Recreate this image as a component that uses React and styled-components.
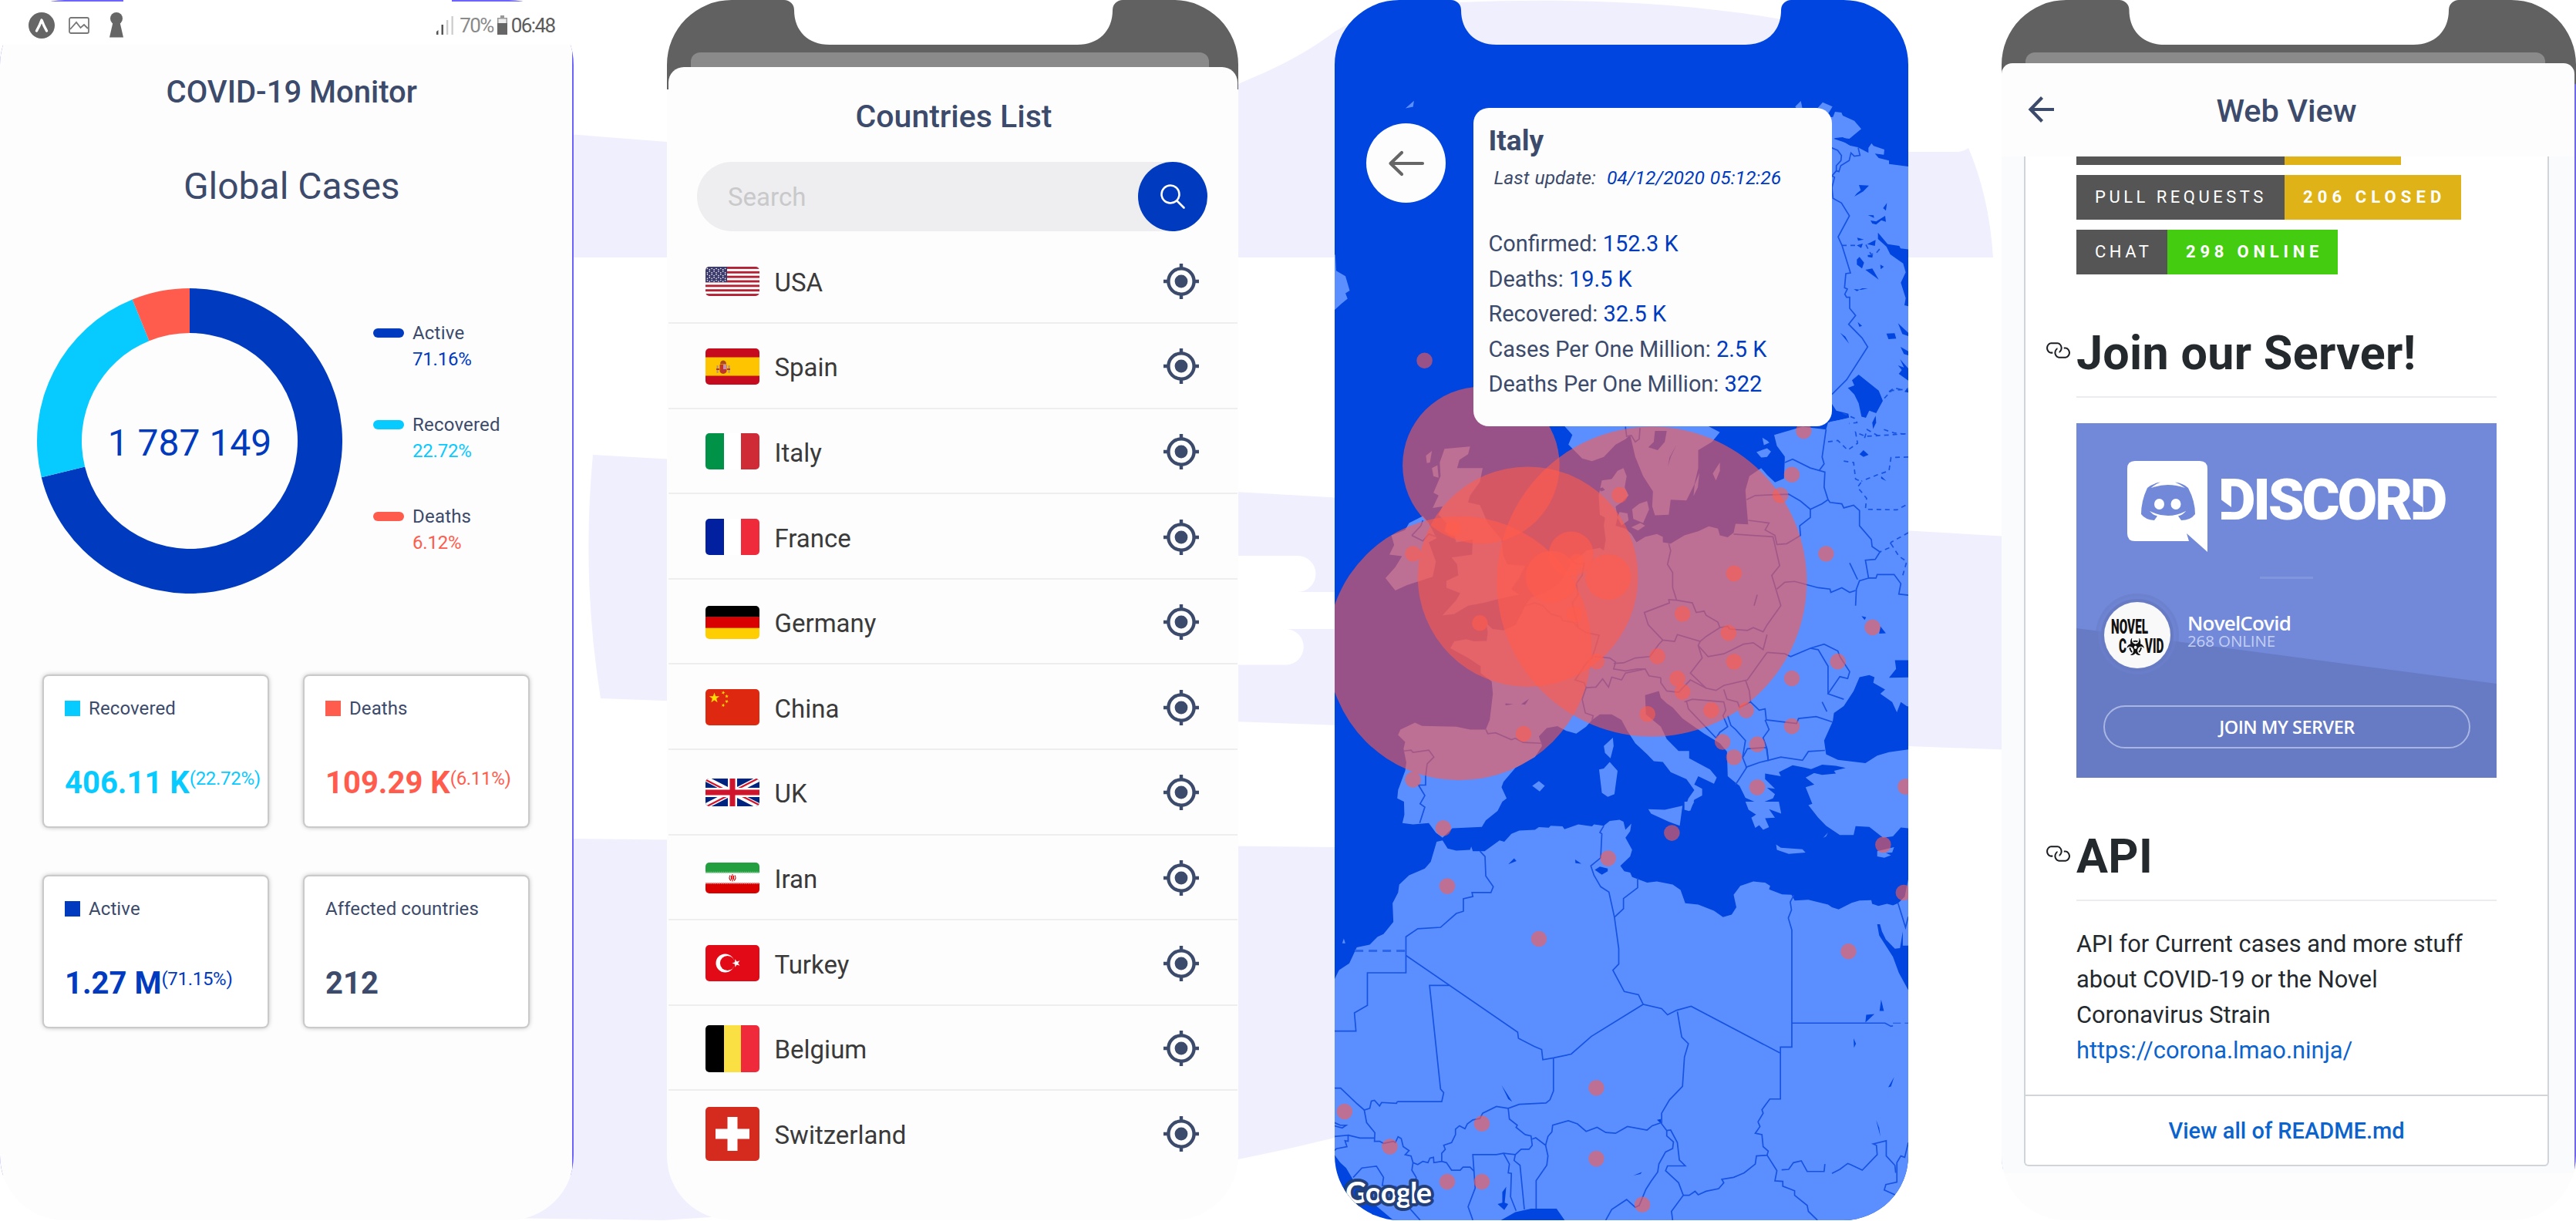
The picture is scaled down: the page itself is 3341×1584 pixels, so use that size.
import React from "react";
import styled, { createGlobalStyle } from "styled-components";
import { FaBiohazard } from "react-icons/fa";

const ink = "#3c4a6b";
const blue = "#003bbf";
const cyan = "#07caff";
const coral = "#ff5c4d";
const violet = "#6c63ff";
const paper = "#fdfdfd";
const water = "#0045df";
const land = "#5b8fff";

const Global = createGlobalStyle`
  * { box-sizing: border-box; }
  body { margin: 0; background: #fff; font-family: Roboto, "Liberation Sans", sans-serif; }
  h1, h2, h3, p, ul { margin: 0; padding: 0; font-weight: inherit; }
  svg { display: block; flex: none; }
`;

/* ---------- page ---------- */

const Stage = styled.main`
  position: relative;
  width: 3341px;
  height: 1584px;
  overflow: hidden;
  display: flex;
`;

const Backdrop = styled.svg`
  position: absolute;
  inset: 0;
`;

const phoneOutline = (w, notch) => {
  const cut = notch
    ? `H${notch[0] - 13} A13 13 0 0 1 ${notch[0]} 13 C${notch[0]} 40 ${notch[0] + 18} 58 ${notch[0] + 46} 58 ` +
      `H${notch[1] - 46} C${notch[1] - 18} 58 ${notch[1]} 40 ${notch[1]} 13 A13 13 0 0 1 ${notch[1] + 13} 0 `
    : "";
  return `M0 84 A84 84 0 0 1 84 0 ${cut}H${w - 84} A84 84 0 0 1 ${w} 84 V1499 A84 84 0 0 1 ${w - 84} 1583 H84 A84 84 0 0 1 0 1499 Z`;
};

const Phone = styled.section`
  position: relative;
  flex: none;
  width: ${(p) => p.$width}px;
  height: 1584px;
  margin-right: ${(p) => p.$after || 0}px;
  padding-right: ${(p) => p.$edge || 0}px;
  background: ${(p) => p.$back};
  clip-path: path("${(p) => phoneOutline(p.$width, p.$notch)}");
  display: flex;
  flex-direction: column;
`;

const ScreenTitle = styled.h1`
  font-size: ${(p) => p.$size || 40}px;
  line-height: 48px;
  font-weight: 500;
  color: ${ink};
  text-align: center;
  white-space: nowrap;
`;

/* ---------- dashboard ---------- */

const Dashboard = styled.div`
  flex: 1;
  background: ${paper};
  display: flex;
  flex-direction: column;
`;

const TopEdge = styled.div`
  display: flex;
  height: 2px;
  padding-left: 65px;
  gap: 426px;
  background: #fff;
`;
const EdgeMark = styled.i`
  width: 95px;
  background: ${violet};
`;

const StatusBar = styled.header`
  height: 56px;
  background: #fff;
  display: flex;
  align-items: center;
  padding: 5px 22px 0 37px;
`;
const StatusIcons = styled.div`
  display: flex;
  align-items: center;
  gap: 18px;
  margin-right: auto;
  svg:last-child { margin-left: 8px; }
`;
const StatusText = styled.span`
  font-size: 26px;
  line-height: 30px;
  letter-spacing: -1.6px;
  color: ${(p) => (p.$strong ? "#5c5c5c" : "#8a8a8a")};
  margin: ${(p) => (p.$strong ? "0 0 0 5px" : "0 5px 0 8px")};
`;

const DashTitle = styled(ScreenTitle)`
  margin-top: 38px;
  padding-left: 15px;
`;
const CasesTitle = styled.h2`
  margin-top: 70px;
  padding-left: 15px;
  font-size: 48px;
  line-height: 56px;
  color: ${ink};
  text-align: center;
`;

const ChartRow = styled.div`
  margin-top: 104px;
  padding-left: 48px;
  display: flex;
`;
const Donut = styled.div`
  display: grid;
  place-items: center;
  > * { grid-area: 1 / 1; }
`;
const Total = styled.strong`
  font-size: 48px;
  line-height: 56px;
  font-weight: 400;
  color: ${blue};
  padding-top: 5px;
`;
const Legend = styled.ul`
  list-style: none;
  margin: 42px 0 0 40px;
  display: flex;
  flex-direction: column;
  gap: 52px;
`;
const LegendItem = styled.li`
  display: grid;
  grid-template-columns: 40px auto;
  column-gap: 11px;
  font-size: 24px;
  line-height: 33.5px;
  letter-spacing: 0.2px;
  color: ${ink};
`;
const Pill = styled.i`
  height: 12px;
  margin-top: 10px;
  border-radius: 6px;
  background: ${(p) => p.$color};
`;
const LegendValue = styled.span`
  grid-column: 2;
  letter-spacing: -0.2px;
  color: ${(p) => p.$color};
`;

const StatGrid = styled.div`
  margin: 107px 0 0 56.5px;
  display: grid;
  grid-template-columns: 290.5px 290.5px;
  grid-auto-rows: 195px;
  gap: 65px 47.5px;
`;
const StatCard = styled.article`
  border-radius: 6px;
  background: #fff;
  box-shadow: 0 0 0 2px #cacaca, 0 0 7px rgba(0, 0, 0, 0.45);
  padding: 24.5px 0 0 27.5px;
`;
const StatLabel = styled.div`
  display: flex;
  align-items: center;
  gap: 11px;
  font-size: 24px;
  line-height: 34px;
  letter-spacing: 0.1px;
  color: ${ink};
`;
const Swatch = styled.i`
  width: 20px;
  height: 20px;
  background: ${(p) => p.$color};
`;
const StatValue = styled.div`
  margin-top: 56.5px;
  display: flex;
  align-items: flex-start;
  font-size: 40px;
  line-height: 48px;
  font-weight: 700;
  white-space: nowrap;
  color: ${(p) => p.$color};
`;
const StatShare = styled.span`
  font-size: 24px;
  line-height: 37px;
  font-weight: 400;
  letter-spacing: -0.3px;
`;

/* ---------- stacked sheets (list and web view) ---------- */

const Peek = styled.div`
  flex: none;
  margin: ${(p) => p.$top}px 38px 0 31px;
  height: ${(p) => p.$height}px;
  border-radius: 12px 12px 0 0;
  background: #8a8a8a;
`;
const Sheet = styled.div`
  flex: 1;
  min-height: 0;
  margin: 0 ${(p) => p.$inset || 0}px;
  border-radius: ${(p) => p.$round || 20}px ${(p) => p.$round || 20}px 0 0;
  background: ${paper};
  display: flex;
  flex-direction: column;
`;

/* ---------- countries ---------- */

const ListTitle = styled(ScreenTitle)`
  padding: 40px 0 0 3px;
`;
const SearchBar = styled.div`
  margin: 35px 38.5px 0 37.5px;
  height: 90px;
  flex: none;
  border-radius: 45px;
  background: #eeeef0;
  display: flex;
  align-items: center;
  justify-content: space-between;
  padding-left: 40px;
  font-size: 33px;
  color: #c9c9cb;
`;
const SearchButton = styled.button`
  width: 90px;
  height: 90px;
  border: 0;
  padding: 0;
  border-radius: 50%;
  background: ${blue};
  display: grid;
  place-items: center;
`;
const CountryList = styled.ul`
  list-style: none;
  margin-top: 9.5px;
`;
const CountryRow = styled.li`
  height: 110.6px;
  padding: 2px 49.5px 0 48.5px;
  display: flex;
  align-items: center;
  border-bottom: 2px solid #eeeeee;
  &:last-child { border-bottom-color: transparent; }
`;
const CountryName = styled.span`
  flex: 1;
  padding-top: 4px;
  margin-left: 19.5px;
  font-size: 33px;
  line-height: 40px;
  color: #3a3a3a;
`;
const FlagFrame = styled.svg`
  border-radius: 5px;
`;

/* ---------- map ---------- */

const MapCanvas = styled.svg`
  position: absolute;
  inset: 0;
`;
const MapOverlay = styled.div`
  position: relative;
  display: flex;
  align-items: flex-start;
  padding: 140px 0 0 41px;
`;
const RoundBack = styled.button`
  width: 103px;
  height: 103px;
  margin-top: 20px;
  border: 0;
  padding: 0;
  border-radius: 50%;
  background: ${paper};
  display: grid;
  place-items: center;
`;
const InfoCard = styled.article`
  width: 465px;
  height: 413px;
  margin-left: 36px;
  border-radius: 20px;
  background: ${paper};
  padding: 21px 0 0 19.500px;
  color: ${ink};
`;
const InfoName = styled.h2`
  font-size: 37px;
  line-height: 44px;
  font-weight: 700;
`;
const InfoDate = styled.p`
  margin-top: 10px;
  padding-left: 7px;
  font-size: 24.6px;
  line-height: 32px;
  font-style: italic;
  white-space: pre;
  word-spacing: 1px;
`;
const InfoLines = styled.div`
  margin-top: 47px;
  font-size: 28.9px;
  line-height: 45.5px;
`;
const InfoLine = styled.p`
  white-space: nowrap;
`;
const Figure = styled.span`
  color: ${blue};
`;

/* ---------- web view ---------- */

const WebHeader = styled.header`
  flex: none;
  height: 121px;
  display: grid;
  grid-template-columns: 70px 1fr 74px;
  align-items: center;
  svg { margin-left: 34px; margin-top: -2px; }
  h1 { padding-top: 2px; }
`;
const WebBody = styled.div`
  flex: none;
  height: 1319px;
  background: #fafbfc;
  padding: 0 33px 9px 29px;
`;
const Readme = styled.article`
  height: 100%;
  border: 2px solid #d1d5da;
  border-top: 0;
  border-radius: 0 0 6px 6px;
  background: #fff;
  display: flex;
  flex-direction: column;
  color: #24292e;
`;
const ReadmeContent = styled.div`
  padding: 0 66px;
`;
const Badge = styled.div`
  display: flex;
  width: max-content;
  height: 58px;
  margin-bottom: 13px;
  font-size: 22px;
  line-height: 58px;
  color: #fff;
`;
const BadgeTail = styled(Badge)`
  height: 10.5px;
  margin-bottom: 13.5px;
`;
const BadgeName = styled.span`
  width: ${(p) => p.$width}px;
  padding-left: 24px;
  letter-spacing: 4.5px;
  background: #555;
  white-space: nowrap;
`;
const BadgeValue = styled.b`
  width: ${(p) => p.$width}px;
  padding-left: 24px;
  letter-spacing: ${(p) => p.$tracking || 0}px;
  background: ${(p) => p.$color};
  white-space: nowrap;
`;
const Heading = styled.h2`
  margin-top: 66px;
  margin-left: -41px;
  display: flex;
  align-items: center;
  font-size: 61px;
  line-height: 72px;
  font-weight: 700;
  letter-spacing: 0.3px;
  white-space: nowrap;
  svg { margin: 0 8px 8px 0; }
`;
const Rule = styled.hr`
  border: 0;
  height: 2px;
  margin: 20px 0 0;
  background: #eaecef;
`;
const DiscordCard = styled.div`
  position: relative;
  margin-top: 33px;
  height: 460px;
  background: #7289da;
  font-family: "Open Sans", "Noto Sans", sans-serif;
  color: #fff;
  display: flex;
  flex-direction: column;
`;
const DiscordSlope = styled.i`
  position: absolute;
  inset: 0;
  background: #677bc4;
  clip-path: polygon(0 266px, 100% 338px, 100% 100%, 0 100%);
`;
const DiscordBrand = styled.div`
  position: relative;
  display: flex;
  align-items: flex-start;
  padding: 49px 0 0 66px;
`;
const Wordmark = styled.span`
  position: relative;
  margin: 8px 0 0 14px;
  font-family: Roboto, sans-serif;
  font-weight: 900;
  font-size: 75px;
  line-height: 84px;
  letter-spacing: -3.2px;
`;
const StemCut = styled.i`
  position: absolute;
  left: ${(p) => p.$left}px;
  top: 41px;
  width: 15px;
  height: 17px;
  background: #7289da;
  clip-path: polygon(0 0, 100% 65%, 100% 100%, 0 100%);
`;
const ShortRule = styled.i`
  position: relative;
  width: 69px;
  height: 3px;
  margin: 32px auto 0;
  background: #8296de;
`;
const ServerRow = styled.div`
  position: relative;
  display: flex;
  align-items: center;
  padding-left: 36px;
  margin-top: 30px;
  height: 86px;
`;
const Avatar = styled.div`
  width: 86px;
  height: 86px;
  border-radius: 50%;
  background: #f9f9f9;
  color: #111;
  box-shadow: 0 0 0 4px #677bc4, 0 0 0 8px rgba(114, 137, 218, 0.2), 0 0 0 11px rgba(103, 123, 196, 0.5);
  font-family: Roboto, sans-serif;
  font-weight: 900;
  font-size: 25px;
  line-height: 25px;
  padding-top: 20px;
`;
const AvatarLine = styled.div`
  display: flex;
  align-items: center;
  gap: 1px;
  width: max-content;
  margin-left: ${(p) => p.$left}px;
  transform: scaleX(0.61);
  transform-origin: 0 50%;
`;
const Hazard = styled(FaBiohazard).attrs({ preserveAspectRatio: "none" })`
  width: 37px;
  height: 22px;
`;
const ServerText = styled.div`
  margin: -12px 0 0 22px;
`;
const ServerName = styled.div`
  font-size: 26px;
  line-height: 26px;
  font-weight: 600;
  letter-spacing: -0.8px;
`;
const ServerOnline = styled.div`
  font-size: 20.5px;
  line-height: 21px;
  letter-spacing: -0.1px;
  color: #c5cff1;
`;
const JoinButton = styled.button`
  position: relative;
  margin: 48px 34px 0 35px;
  height: 56px;
  border: 2.5px solid #a9b5e2;
  border-radius: 28px;
  background: none;
  color: #fff;
  font: 600 23.5px/50px "Open Sans", sans-serif;
  letter-spacing: -0.5px;
  padding: 0;
`;
const Paragraph = styled.p`
  margin-top: 33px;
  font-size: 30.8px;
  line-height: 46px;
  white-space: nowrap;
`;
const Link = styled.a`
  color: #0b63ce;
`;
const ReadmeFooter = styled.footer`
  flex: 1;
  margin-top: 34px;
  border-top: 2px solid #d1d5da;
  display: grid;
  place-items: center;
  font-size: 29px;
  font-weight: 500;
  color: #0b63ce;
`;

/* ---------- drawings ---------- */

const arc = (from, to, R, r, c) => {
  const pt = (t, rad) => {
    const a = t * 2 * Math.PI - Math.PI / 2;
    return `${(c + rad * Math.cos(a)).toFixed(2)} ${(c + rad * Math.sin(a)).toFixed(2)}`;
  };
  const big = to - from > 0.5 ? 1 : 0;
  return `M${pt(from, R)} A${R} ${R} 0 ${big} 1 ${pt(to, R)} L${pt(to, r)} A${r} ${r} 0 ${big} 0 ${pt(from, r)} Z`;
};

const DonutChart = () => (
  <svg width="396" height="396" viewBox="0 0 396 396">
    <path d={arc(0, 0.7116, 198, 140, 198)} fill={blue} />
    <path d={arc(0.7116, 0.9388, 198, 140, 198)} fill={cyan} />
    <path d={arc(0.9388, 0.99999, 198, 140, 198)} fill={coral} />
  </svg>
);

const Locate = () => (
  <svg width="46" height="46" viewBox="0 0 46 46" fill="none" stroke={ink} strokeWidth="4.4">
    <circle cx="23" cy="23" r="16.6" />
    <path d="M23 0V7M23 39V46M0 23H7M39 23H46" />
    <circle cx="23" cy="23" r="8.4" fill={ink} stroke="none" />
  </svg>
);

const LinkIcon = () => (
  <svg width="33" height="33" viewBox="0 0 16 16" fill="#1b1f23">
    <path d="M4 9h1v1H4c-1.5 0-3-1.69-3-3.5S2.55 3 4 3h4c1.45 0 3 1.69 3 3.5 0 1.41-.91 2.72-2 3.25V8.59c.58-.45 1-1.27 1-2.09C10 5.22 8.98 4 8 4H4c-.98 0-2 1.22-2 2.5S3 9 4 9zm9-3h-1v1h1c1 0 2 1.22 2 2.5S13.98 12 13 12H9c-.98 0-2-1.22-2-2.5 0-.83.42-1.64 1-2.09V6.25c-1.09.53-2 1.84-2 3.25C6 11.31 7.55 13 9 13h4c1.45 0 3-1.69 3-3.5S14.5 6 13 6z" />
  </svg>
);

const star = (cx, cy, r, turn = 0) =>
  Array.from({ length: 10 }, (_, i) => {
    const a = (i * Math.PI) / 5 - Math.PI / 2 + turn;
    const k = i % 2 ? r * 0.4 : r;
    return `${(cx + k * Math.cos(a)).toFixed(2)},${(cy + k * Math.sin(a)).toFixed(2)}`;
  }).join(" ");

const Bands = ({ colors, h, vertical }) =>
  colors.map((c, i) =>
    vertical ? (
      <rect key={i} x={i ? 24 + (i - 1) * 22 : 0} width="26" height={h} fill={c} />
    ) : (
      <rect key={i} y={(h / 3) * i} width="70" height={h / 3 + 0.4} fill={c} />
    )
  );

const countries = [
  {
    name: "USA", h: 38,
    art: (
      <>
        <rect width="70" height="38" fill="#fff" />
        {[0, 1, 2, 3, 4, 5, 6].map((i) => <rect key={i} y={i * 5.85} width="70" height="2.9" fill="#b22234" />)}
        <rect width="28" height="20" fill="#3c3b6e" />
        {Array.from({ length: 45 }, (_, i) => (
          <circle key={i} cx={2.4 + (i % 9) * 2.9} cy={2.5 + Math.floor(i / 9) * 3.8 + (i % 2 ? 1.4 : 0)} r="0.8" fill="#fff" />
        ))}
      </>
    ),
  },
  {
    name: "Spain", h: 47,
    art: (
      <>
        <rect width="70" height="47" fill="#c60b1e" />
        <rect y="11.5" width="70" height="24" fill="#ffc400" />
        <path d="M15.500 22V32M30.500 22V32" stroke="#b9907a" strokeWidth="2" />
        <path d="M18.500 21H27.500V29Q27.500 32 23 33Q18.500 32 18.500 29Z" fill="#c0352b" />
        <path d="M23 21H27.500V27H23Z" fill="#c98fb0" />
        <path d="M19 20.500Q19 16 23 15.500Q27 16 27 20.500Z" fill="#ad4a1c" />
        <path d="M14 27H18M28 27H32" stroke="#ad1519" strokeWidth="1.500" />
      </>
    ),
  },
  { name: "Italy", h: 47, art: <Bands vertical h={47} colors={["#009246", "#fff", "#ce2b37"]} /> },
  { name: "France", h: 47, art: <Bands vertical h={47} colors={["#00209f", "#fff", "#ef2b3b"]} /> },
  { name: "Germany", h: 43, art: <Bands h={43} colors={["#000", "#d80000", "#ffce00"]} /> },
  {
    name: "China", h: 47,
    art: (
      <>
        <rect width="70" height="47" fill="#de2910" />
        <polygon points={star(11.5, 11.5, 7)} fill="#ffde00" />
        <polygon points={star(23, 4.6, 2.5, 0.4)} fill="#ffde00" />
        <polygon points={star(27.5, 9.3, 2.5, 0.1)} fill="#ffde00" />
        <polygon points={star(27.5, 16, 2.5, 0.6)} fill="#ffde00" />
        <polygon points={star(23, 21, 2.5, 0.3)} fill="#ffde00" />
      </>
    ),
  },
  {
    name: "UK", h: 36,
    art: (
      <>
        <rect width="70" height="36" fill="#00247d" />
        <path d="M0 0L70 36M70 0L0 36" stroke="#fff" strokeWidth="7" />
        <path d="M0 1.500L35 19.500M70 34.500L35 16.500M68 0L35 17M2 36L35 19" stroke="#cf142b" strokeWidth="2.200" />
        <path d="M35 0V36M0 18H70" stroke="#fff" strokeWidth="12" />
        <path d="M35 0V36M0 18H70" stroke="#cf142b" strokeWidth="7" />
      </>
    ),
  },
  {
    name: "Iran", h: 40,
    art: (
      <>
        <Bands h={40} colors={["#239f40", "#fff", "#da0000"]} />
        <path d="M0 12.800H70" stroke="#7cc68c" strokeWidth="2" strokeDasharray="1.500 1" />
        <path d="M0 27H70" stroke="#e98080" strokeWidth="2" strokeDasharray="1.500 1" />
        <path d="M35 15V24.500M32 16.500Q29.500 20.500 33 23.500M38 16.500Q40.500 20.500 37 23.500M33.500 17V22M36.500 17V22" stroke="#da0000" strokeWidth="1.100" fill="none" />
      </>
    ),
  },
  {
    name: "Turkey", h: 47,
    art: (
      <>
        <rect width="70" height="47" fill="#e30a17" />
        <circle cx="25.500" cy="23.500" r="12" fill="#fff" />
        <circle cx="28.500" cy="23.500" r="9.600" fill="#e30a17" />
        <polygon points={star(40, 23.5, 5.5, -Math.PI / 2)} fill="#fff" />
      </>
    ),
  },
  { name: "Belgium", h: 61, art: <Bands vertical h={61} colors={["#000", "#fae042", "#ef2b3b"]} /> },
  {
    name: "Switzerland", h: 70,
    art: (
      <>
        <rect width="70" height="70" fill="#d52b1e" />
        <path d="M35 13V57M13 35H57" stroke="#fff" strokeWidth="13" />
      </>
    ),
  },
];

/* Map tiles: every tile has its own grid, placed on the canvas by its transform. */
const tiles = {
  west: { x: -71, y: 0, sx: 0.5485, sy: 0.3444 },
  europe: { x: -31, y: 500, sx: 0.5102, sy: 0.3571 },
  africa: { x: -31, y: 1040, sx: 0.5102, sy: 0.3469 },
  north: { x: 559, y: 120, sx: 0.3333, sy: 0.3333 },
};
const place = (t) => `translate(${tiles[t].x} ${tiles[t].y}) scale(${tiles[t].sx} ${tiles[t].sy})`;

const europeLand = [
  "237,1512 220,1500 222,1470 240,1400 243,1370 236,1320 240,1295 222,1270 228,1250 265,1225 283,1237 370,1240 405,1250 445,1250 455,1215 463,1120 460,1075 432,1045 432,1020 400,990 355,955 365,930 395,922 415,930 447,928 450,900 447,865 462,885 490,890 520,870 535,830 545,800 560,770 600,750 630,720 640,700 665,640 690,615 700,600 735,590 745,600 750,560 745,510 748,480 735,470 732,400 740,345 765,340 780,310 795,300 803,330 798,370 808,400 790,425 775,440 780,480 775,510 800,520 815,540 828,570 850,550 880,540 895,550 895,570 915,575 950,545 985,530 1012,512 1035,520 1040,545 1060,552 1075,535 1080,503 1112,505 1108,440 1105,380 1115,330 1145,300 1160,325 1180,352 1203,338 1205,270 1205,258 1185,220 1178,180 1250,150 1310,160 1315,135 1345,125 1530,60 1530,1610 1500,1606 1480,1638 1455,1643 1420,1604 1385,1601 1380,1633 1345,1633 1310,1600 1290,1570 1265,1525 1275,1520 1258,1460 1280,1450 1258,1425 1290,1400 1255,1388 1225,1380 1190,1405 1195,1420 1155,1410 1155,1430 1180,1465 1160,1462 1180,1485 1175,1500 1140,1520 1105,1498 1090,1455 1060,1420 1058,1330 1040,1300 1000,1265 945,1210 920,1170 905,1155 890,1135 885,1110 850,1125 852,1195 890,1240 905,1285 935,1328 962,1328 962,1355 1015,1395 1032,1425 1025,1447 985,1420 975,1450 995,1465 995,1490 975,1505 965,1545 950,1540 960,1500 975,1470 955,1430 915,1405 895,1368 872,1365 855,1340 825,1300 805,1255 790,1215 765,1195 735,1195 715,1215 700,1240 675,1265 650,1255 627,1238 600,1245 580,1275 588,1310 570,1350 520,1390 490,1440 485,1460 498,1500 487,1512 475,1546 445,1580 435,1604 360,1609 335,1643 318,1625 300,1590 260,1595 233,1590 238,1560",
  "340,230 405,222 400,250 378,270 372,300 437,300 430,350 405,400 400,425 430,435 450,500 485,560 490,620 500,650 545,655 530,700 510,740 530,760 480,775 440,790 400,800 365,830 335,835 370,780 380,755 345,735 345,710 375,690 372,650 358,625 410,615 412,560 370,570 365,545 340,530 345,500 325,470 335,440 310,445 325,400 312,390 330,330 328,280",
  "293,255 308,238 303,280 295,282",
  "308,300 322,290 325,335 312,330",
  "285,475 250,500 240,525 205,545 212,580 200,615 232,620 215,660 190,700 215,745 245,725 310,695 318,640 300,570 320,555 300,500",
  "640,140 665,180 655,215 690,265 715,275 745,260 775,215 800,195 812,180 825,260 845,330 870,385 868,440 875,472 910,470 915,415 955,418 975,360 985,300 985,235 1020,205 1040,170 1000,140",
  "1022,320 1040,280 1040,310 1030,345",
  "988,318 984,370 973,402 976,360",
  "817,450 835,430 855,420 860,450 845,500 820,485",
  "785,460 805,465 808,490 790,508 780,480",
  "815,515 838,500 850,510 832,527",
  "1148,190 1160,200 1166,208 1152,217",
  "1133,242 1160,228 1170,240 1160,260 1145,262",
  "745,1310 768,1280 770,1310 762,1355 748,1335",
  "733,1395 745,1392 760,1368 780,1400 772,1485 755,1495 740,1480",
  "563,1455 580,1437 595,1455 582,1475",
];
const europeWater = [
  "1420,1052 1395,1060 1380,1110 1355,1165 1330,1190 1327,1220 1305,1290 1310,1340 1340,1360 1410,1372 1440,1345 1470,1332 1530,1320 1530,1170 1515,1165 1500,1150 1490,1187 1478,1150 1448,1120 1460,1105 1430,1080 1433,1060",
  "1485,998 1530,998 1530,1060 1470,1062 1488,1030",
  "1265,1398 1300,1378 1335,1382 1360,1390 1330,1400 1335,1410 1300,1415 1270,1405",
  "875,165 905,165 900,205 882,235 858,225 872,205",
  "930,215 915,260 908,295 912,262",
  "1395,250 1405,235 1418,252 1405,260",
  "1400,838 1412,842 1408,852",
  "1448,875 1462,900 1445,902",
  "495,1155 515,1158 495,1162",
  "535,1158 555,1138 545,1160",
  "920,480 935,495 922,498",
  "732,375 742,370 748,380 738,385",
  "1450,330 1463,347 1450,338",
];
const europeLines = [
  "445,1250 450,1265 470,1262 510,1287 520,1282 540,1297 588,1300",
  "236,1328 255,1325 260,1333 300,1325 313,1350 296,1375 292,1420 292,1452 274,1452 290,1490 278,1520 290,1532 277,1590",
  "545,800 570,790 590,800 610,830 635,840 640,855 668,860 680,880 700,898 733,908 722,960 715,990 700,1010 672,1070 695,1080 700,1098 690,1140 698,1190 718,1200 715,1215",
  "665,640 680,650 695,645 690,690 675,720 680,760 665,790 680,880",
  "700,1098 725,1096 742,1066 757,1096 765,1060 790,1070 800,1045 850,1030 860,1055 890,1062",
  "722,985 760,990 775,1005 770,1030 800,1037 830,1030 850,1030",
  "770,1010 795,1008 825,990 862,985 885,940 895,925",
  "910,575 915,600 907,650 920,680 920,735 930,780",
  "930,780 910,778 912,790 848,825 858,870 895,925 925,930 932,905 990,930 1005,912 1040,880 1035,860 1005,835 1000,820 980,825 970,790 930,780",
  "1040,880 1060,875 1065,885 1110,890 1125,880 1150,895 1160,870 1195,800 1172,690 1192,655 1175,550 1075,540",
  "990,930 985,945 1010,985 1050,975 1100,940 1125,935 1150,960 1160,905",
  "1160,970 1110,1070 1050,1090 1030,1108 1005,1100 965,1045 995,990 985,945",
  "1112,490 1165,500 1155,525 1180,545 1185,578 1210,575 1245,545 1243,510 1270,480 1270,450",
  "1108,415 1130,400 1215,395 1245,420 1270,450 1300,430 1315,415 1305,370 1307,315 1270,300 1225,268 1205,280",
  "1315,415 1320,425 1350,430 1355,445 1380,435 1395,455 1395,510 1425,560 1427,585 1447,605 1435,632 1410,635 1418,700 1395,710 1387,740 1385,800",
  "1418,700 1437,700 1440,687 1483,687 1500,720 1495,758 1519,762",
  "1185,740 1205,715 1230,712 1290,735 1320,740 1322,752 1350,735 1370,752 1385,745",
  "1160,970 1205,975 1220,985 1270,955 1305,940 1340,965 1345,985 1370,1040 1365,1065 1345,1058 1315,1120 1355,1140",
  "1270,955 1290,960 1315,1020 1315,1120",
  "1105,1070 1115,1110 1118,1150 1140,1180 1155,1175 1158,1215 1235,1228 1240,1210 1285,1203 1327,1223",
  "1155,1215 1165,1250 1150,1280 1160,1320 1163,1362 1195,1350 1250,1362 1265,1330 1307,1326",
  "1105,1388 1140,1370 1163,1362 1158,1315 1110,1320 1098,1352 1108,1388 1080,1450",
  "950,1150 970,1140 1050,1150 1055,1180 1048,1200 1060,1240 1040,1260 1030,1282",
  "955,1145 960,1175 1030,1280",
  "1050,1105 1058,1140 1085,1150 1090,1170 1118,1150",
  "890,1062 890,1080 905,1110 935,1115 965,1070 1005,1100",
  "1060,1200 1068,1235 1080,1250 1105,1290 1098,1350",
  "800,150 803,185 815,182 825,205 835,195 837,155",
  "257,545 285,565 300,540 320,550",
  "257,545 280,510 285,490",
  "1310,160 1300,260 1305,285 1292,310",
  "1135,760 1127,800",
  "1370,645 1390,705",
  "1300,1150 1312,1185",
];
const europeDashes = [
  "1315,205 1340,200 1365,235 1390,210 1385,170 1410,185 1470,180 1519,175",
  "1355,275 1380,280 1385,340 1400,350 1390,370 1413,410 1410,450 1490,452 1519,430",
  "1519,260 1475,262 1470,310 1440,325 1400,348",
  "1519,535 1475,570 1470,590 1447,605",
  "1475,575 1495,620 1515,640 1505,690",
];

const africaLand = [
  "320,150 335,145 348,175 370,183 405,180 408,168 412,185 442,185 480,145 492,150 510,120 530,108 570,105 580,95 605,97 610,90 640,92 645,103 680,85 715,92 720,85 745,90 760,72 785,68 795,75 800,105 815,82 812,110 800,135 817,180 812,205 787,240 797,260 812,265 817,282 855,303 880,298 920,310 940,330 952,380 985,385 1025,408 1048,432 1070,422 1082,395 1075,348 1092,315 1125,298 1155,303 1168,315 1165,328 1198,347 1222,348 1230,370 1265,367 1315,385 1325,395 1342,403 1375,378 1395,370 1425,368 1427,382 1443,390 1465,382 1480,388 1493,380 1510,355 1519,290 1530,290 1530,1575 650,1575 625,1522 560,1522 520,1535 480,1568 480,1575 218,1575 165,1510 110,1420 90,1370 75,1350 55,1310 55,680 72,630 98,605 117,545 150,535 170,505 185,495 210,450 208,380 222,340 225,310 250,275 290,250 305,225",
  "858,28 900,30 945,15 938,90 910,75 865,45",
  "950,0 975,0 962,35 950,30",
  "1183,160 1195,172 1250,178 1258,190 1215,195 1185,180",
  "1440,185 1483,170 1478,190 1462,192 1475,200 1458,210 1440,205",
  "1105,0 1190,0 1196,45 1165,28 1180,60 1155,62 1165,95 1150,105 1140,88 1130,98 1120,60 1132,48 1113,30",
  "80,530 84,512 88,530",
  "1303,135 1315,115 1310,130",
];
const africaWater = [
  "1440,458 1447,458 1452,485 1462,515 1485,550 1498,548 1505,485 1505,538 1530,538 1530,740 1519,705 1495,640 1480,580 1445,500",
  "722,255 735,243 755,250 755,260 740,273",
  "502,234 517,212 523,222",
  "672,216 688,232 673,230",
  "1450,740 1457,783 1446,783",
  "1412,797 1433,794 1410,826",
  "1380,885 1386,905 1381,920",
  "485,1060 512,1122 502,1112",
  "487,1500 487,1460 497,1440 493,1500 502,1505 492,1527 475,1505",
  "880,1190 890,1187 890,1203",
  "820,1398 842,1385 838,1392",
  "1483,1030 1475,1065 1468,1068",
  "1437,1190 1445,1220 1448,1252",
];
const africaLines = [
  "745,90 735,115 740,120 737,210 712,240 720,275 737,318 758,338 772,432 783,550 783,607 768,630 797,710 833,722 845,758",
  "831,285 831,322 795,362 795,400 772,432",
  "430,185 443,205 445,278 464,318 458,340 410,340 412,355 388,363 388,410 370,418 330,470 272,475 242,505 242,640 144,640 144,762 111,790 115,858 60,858",
  "242,575 526,862 528,885 568,915 587,927 590,965 617,958 662,944 713,878 845,758 892,774 907,797 930,780 967,765 1193,940",
  "352,687 302,687 330,1075 338,1088 333,1122 220,1122",
  "220,1122 218,1128 180,1125 175,1138 162,1117 154,1120 150,1147 136,1153 118,1130 76,1071 60,1071",
  "617,958 617,1082 608,1115 598,1127 530,1132 502,1147 472,1140 437,1165 430,1185 412,1190 398,1205 392,1223 378,1212 368,1225 368,1245 358,1275 338,1285 342,1300 333,1315 333,1345",
  "502,1147 505,1187 525,1210 522,1218 545,1245 560,1250 563,1285 555,1300 535,1300 520,1320 490,1315 472,1320 412,1320 418,1445 400,1515 412,1565",
  "563,1262 572,1257 597,1285 603,1325 600,1360 573,1417 573,1522",
  "597,1285 603,1252 613,1235 615,1210 655,1193 678,1205 700,1233 728,1218 750,1237 775,1240 805,1215 855,1228 868,1212 892,1200",
  "932,785 943,880 960,905 950,955 945,1065 912,1115 892,1165 892,1205 905,1230 905,1250 922,1272 920,1297 902,1310 885,1355 882,1385 865,1420 852,1450 835,1510 825,1517 803,1488 765,1525 750,1565",
  "905,1230 915,1228 932,1275 937,1340 952,1362 907,1362 902,1380 935,1425 947,1472 917,1532 920,1565",
  "947,1472 962,1472 977,1457 985,1470 1005,1457 1037,1447 1050,1425 1045,1412 1075,1405 1102,1388 1130,1355 1133,1325 1160,1322 1163,1307 1150,1290 1147,1245 1130,1240 1142,1215 1137,1197 1150,1165 1147,1152 1167,1112 1194,1112 1194,918 1223,918 1223,480 1214,435 1222,405 1219,375 1228,350",
  "1223,828 1460,828 1475,840 1480,838",
  "1160,1322 1185,1380 1180,1418 1200,1420 1200,1438 1230,1455 1230,1472 1262,1510 1265,1532 1288,1565",
  "1197,1377 1215,1375 1227,1350 1247,1343 1262,1383 1305,1383 1307,1355",
  "1325,1390 1345,1375 1365,1353 1372,1357 1402,1378 1440,1320 1438,1285 1430,1280 1463,1268 1463,1325 1485,1360 1487,1388",
  "1519,1275 1510,1330 1500,1325 1490,1350 1490,1423 1462,1432 1458,1452 1485,1470 1495,1492 1519,1480",
  "136,1153 142,1200 163,1238 162,1270 175,1270 185,1278 210,1270 215,1275 222,1253 230,1260 235,1290 250,1305 240,1320 255,1325 260,1350 272,1357 285,1345 298,1350 303,1333 312,1330 313,1350 333,1345 345,1350 358,1378 380,1378 387,1367 405,1367 415,1382",
  "260,1350 257,1378 268,1405 262,1470 245,1510 278,1565",
  "108,1405 130,1370 167,1363 185,1405 182,1435 217,1440 217,1470",
  "60,1252 95,1247 95,1270 87,1268 92,1290 65,1298 60,1305",
  "95,1247 125,1258 162,1258",
  "60,1200 75,1210 90,1210 80,1220 60,1212",
  "520,1320 517,1342 532,1360 543,1525",
  "490,1315 505,1355 502,1388 510,1390 508,1478 522,1530",
  "1493,380 1512,470 1519,430",
];

const northLand = [
  "200,100 262,95 270,75 295,78 300,90 345,110 372,142 326,180 290,176 265,180 310,195 330,207 358,213 400,235 400,215 412,198 420,208 462,222 460,242 425,238 440,255 480,265 480,278 555,288 570,290 570,1360 225,1360 240,1330 245,1300 250,1282 285,1275 325,1268 322,1250 275,1238 258,1212 200,1200",
  "115,55 137,33 143,62 120,62",
  "198,65 222,38 260,55 245,80",
];
const northWater = [
  "437,545 475,590 520,597 525,607 570,612 570,835 540,828 545,800 526,740 545,700 535,665 485,630 470,600 437,570",
  "362,1098 336,1120 345,1140 320,1150 345,1175 362,1210 373,1262 390,1266 403,1238 430,1248 456,1200 440,1160",
  "363,360 402,362 380,385 345,405 355,392 370,380",
  "457,450 472,430 468,460",
  "398,477 420,478 422,488",
  "408,498 430,502 465,480 468,503 450,497 430,514 415,510",
  "355,650 365,640 383,662 375,685 355,670",
  "388,690 415,685 440,728",
  "395,590 428,574 425,597",
  "356,565 382,572 360,577",
  "355,595 378,588 372,605",
  "446,670 460,678 448,688",
  "397,632 417,632 415,643 398,640",
  "343,765 370,768 398,763 375,762 355,773",
  "470,938 502,937 508,958 478,960",
  "515,898 560,940 560,950 532,940",
  "525,990 560,1010 560,1025 538,1018",
  "523,1038 560,1080 560,1125 518,1095 530,1080 515,1062 538,1070",
  "290,935 310,950 325,978",
  "358,893 375,908 365,912",
  "540,1165 553,1148 556,1168",
  "428,1258 430,1285 418,1310 415,1285",
  "265,178 300,174 335,190 330,207 300,190",
];
const northLines = [
  "256,215 280,225 295,245 293,265 275,285 275,305 285,308 292,285 325,265 332,235 345,248 367,245 360,215",
  "275,305 258,325 268,330 258,370 262,412 295,430 326,480 282,562 297,595 330,702 312,705 307,760 318,765 308,785 315,797 327,797 327,840 350,868 323,902 375,955 397,990 315,1118 258,1175",
];
const northDashes = [
  "297,595 370,595",
  "390,592 410,630 430,625 450,602",
  "480,1165 500,1150 535,1158",
  "462,1190 490,1160 550,1155",
  "460,1312 500,1325 545,1330",
  "300,1248 350,1270 355,1285 325,1288",
  "385,1345 395,1312 440,1338",
];

const hot = [
  ["europe", 867, 713, 201], ["europe", 552, 695, 142.8], ["europe", 378, 955, 171.3], ["europe", 433, 290, 101.8],
  ["europe", 662, 612, 29], ["europe", 612, 695, 33.7], ["europe", 756, 696, 29.6],
];
const dots = [
  ["west", 342, 1358], ["europe", 785, 398], ["europe", 1253, 165], ["europe", 1223, 324], ["europe", 1194, 399],
  ["europe", 1310, 612], ["europe", 260, 612], ["europe", 1076, 683], ["europe", 1428, 879], ["europe", 945, 830],
  ["europe", 1062, 899], ["europe", 430, 863], ["europe", 881, 984], ["europe", 1076, 1004], ["europe", 1340, 1003],
  ["europe", 932, 1065], ["europe", 945, 1113], ["europe", 1223, 1064], ["europe", 727, 1003], ["europe", 1018, 1180],
  ["europe", 1107, 1180], ["europe", 856, 1194], ["europe", 541, 1266], ["europe", 1223, 1238], ["europe", 1047, 1295],
  ["europe", 1135, 1304], ["europe", 1076, 1351], ["europe", 260, 1432], ["europe", 1135, 1460], ["europe", 1512, 1458],
  ["europe", 362, 520], ["europe", 676, 640], ["europe", 670, 832],
  ["africa", 337, 99], ["africa", 918, 117], ["africa", 1455, 161], ["africa", 756, 212], ["africa", 347, 316],
  ["africa", 1507, 340], ["africa", 580, 513], ["africa", 1367, 560], ["africa", 726, 1070], ["africa", 86, 1159],
  ["africa", 435, 1204], ["africa", 201, 1290], ["africa", 726, 1335], ["africa", 347, 1421], ["africa", 435, 1421],
  ["africa", 843, 1507],
];

const Shapes = ({ list, fill }) => list.map((pts, i) => <polygon key={i} points={pts} fill={fill} />);
const Lines = ({ list, dashed }) =>
  list.map((pts, i) => (
    <polyline
      key={i} points={pts} fill="none" stroke="#1653e3" strokeWidth="1.7"
      strokeDasharray={dashed ? "6 5" : undefined} vectorEffect="non-scaling-stroke"
    />
  ));
const Spot = ({ at: [t, x, y, r = 10.3] }) => (
  <circle cx={tiles[t].x + x * tiles[t].sx} cy={tiles[t].y + y * tiles[t].sy} r={r} fill={coral} fillOpacity="0.6" />
);

const WorldMap = () => (
  <MapCanvas width="744" height="1584" viewBox="0 0 744 1584">
    <g transform={place("west")} fill={land}>
      <polygon points="120,960 131,960 133,1020 155,1040 165,1095 155,1105 160,1125 145,1145 129,1168 120,1168" />
      <polygon points="297,408 317,380 315,402" />
    </g>
    <g transform={place("europe")}>
      <Shapes list={europeLand} fill={land} />
    </g>
    <g transform={place("north")}>
      <Shapes list={northLand} fill={land} />
      <Shapes list={northWater} fill={water} />
      <Lines list={northLines} />
      <Lines list={northDashes} dashed />
    </g>
    <g transform={place("europe")}>
      <Shapes list={europeWater} fill={water} />
      <Lines list={europeLines} />
      <Lines list={europeDashes} dashed />
    </g>
    <g transform={place("africa")}>
      <Shapes list={africaLand} fill={land} />
      <Shapes list={africaWater} fill={water} />
      <Lines list={africaLines} />
      <path d="M112 558H242" stroke="#2c66ec" strokeWidth="3" strokeDasharray="11 7" vectorEffect="non-scaling-stroke" />
      <path d="M1480 828H1500M1510 828H1519" stroke="#1653e3" strokeWidth="3" />
    </g>
    {hot.map((h, i) => <Spot key={i} at={h} />)}
    {dots.map((d, i) => <Spot key={i} at={d} />)}
    <text
      x="14" y="1561" fontFamily="Lato, sans-serif" fontWeight="700" fontSize="38" textLength="112"
      fill="#fff" stroke="#24407a" strokeWidth="8" strokeLinejoin="round" paintOrder="stroke"
    >
      Google
    </text>
  </MapCanvas>
);

/* ---------- screens ---------- */

const legend = [
  ["Active", "71.16%", blue],
  ["Recovered", "22.72%", cyan],
  ["Deaths", "6.12%", coral],
];
const stats = [
  { label: "Recovered", value: "406.11 K", share: "(22.72%)", color: cyan },
  { label: "Deaths", value: "109.29 K", share: "(6.11%)", color: coral },
  { label: "Active", value: "1.27 M", share: "(71.15%)", color: blue },
  { label: "Affected countries", value: "212" },
];

const DashboardScreen = () => (
  <Dashboard>
    <TopEdge><EdgeMark /><EdgeMark /></TopEdge>
    <StatusBar>
      <StatusIcons>
        <svg width="34" height="34" viewBox="0 0 34 34">
          <circle cx="17" cy="17" r="17" fill="#666" />
          <path d="M10.500 24Q14.500 17 17 10Q19.500 17 23.500 24" fill="none" stroke="#fff" strokeWidth="3.400" strokeLinejoin="round" strokeLinecap="round" />
        </svg>
        <svg width="27" height="22" viewBox="0 0 27 22" fill="none" stroke="#777" strokeWidth="1.800">
          <rect x="1" y="1" width="25" height="20" rx="2" />
          <path d="M2 16L10 7L15.500 14L20 10L25 15" />
        </svg>
        <svg width="18" height="33" viewBox="0 0 18 33" fill="#666">
          <circle cx="9" cy="8" r="8" />
          <path d="M4.500 13H13.500L18 32.500H0Z" />
        </svg>
      </StatusIcons>
      <svg width="22" height="25" viewBox="0 0 22 25">
        <path d="M0 25V21L2.500 19V25Z M6.500 12H9V25H6.500Z" fill="#555" />
        <path d="M13 6H15.300V25H13Z M19.500 1H21.800V25H19.500Z" fill="#ccc" />
      </svg>
      <StatusText>70%</StatusText>
      <svg width="13" height="25" viewBox="0 0 13 25">
        <path d="M4 0H9V3H13V25H0V3H4Z" fill="#999" />
        <path d="M1.500 4.500H11.500V10H1.500Z" fill="#eee" />
        <path d="M0 10H13V25H0Z" fill="#666" />
      </svg>
      <StatusText $strong>06:48</StatusText>
    </StatusBar>
    <DashTitle>COVID-19 Monitor</DashTitle>
    <CasesTitle>Global Cases</CasesTitle>
    <ChartRow>
      <Donut>
        <DonutChart />
        <Total>1 787 149</Total>
      </Donut>
      <Legend>
        {legend.map(([name, value, color]) => (
          <LegendItem key={name}>
            <Pill $color={color} />
            <span>{name}</span>
            <LegendValue $color={color}>{value}</LegendValue>
          </LegendItem>
        ))}
      </Legend>
    </ChartRow>
    <StatGrid>
      {stats.map((s) => (
        <StatCard key={s.label}>
          <StatLabel>
            {s.color && <Swatch $color={s.color} />}
            {s.label}
          </StatLabel>
          <StatValue $color={s.color || ink}>
            {s.value}
            {s.share && <StatShare>{s.share}</StatShare>}
          </StatValue>
        </StatCard>
      ))}
    </StatGrid>
  </Dashboard>
);

const CountriesScreen = () => (
  <>
    <Peek $top={68} $height={19} />
    <Sheet $inset={1.5}>
      <ListTitle $size={41}>Countries List</ListTitle>
      <SearchBar>
        Search
        <SearchButton>
          <svg width="34" height="34" viewBox="0 0 34 34" fill="none" stroke="#fff" strokeWidth="2.600" strokeLinecap="round">
            <circle cx="14" cy="14" r="11.500" />
            <path d="M22.500 22.500L31.500 31.500" />
          </svg>
        </SearchButton>
      </SearchBar>
      <CountryList>
        {countries.map((c) => (
          <CountryRow key={c.name}>
            <FlagFrame width="70" height={c.h} viewBox={`0 0 70 ${c.h}`}>{c.art}</FlagFrame>
            <CountryName>{c.name}</CountryName>
            <Locate />
          </CountryRow>
        ))}
      </CountryList>
    </Sheet>
  </>
);

const facts = [
  ["Confirmed", "152.3 K"],
  ["Deaths", "19.5 K"],
  ["Recovered", "32.5 K"],
  ["Cases Per One Million", "2.5 K"],
  ["Deaths Per One Million", "322"],
];

const MapScreen = () => (
  <>
    <WorldMap />
    <MapOverlay>
      <RoundBack>
        <svg width="48" height="34" viewBox="0 0 48 34" fill="none" stroke="#666" strokeWidth="4.200" strokeLinecap="round" strokeLinejoin="round">
          <path d="M18 3L3.500 17L18 31M3.500 17H45" />
        </svg>
      </RoundBack>
      <InfoCard>
        <InfoName>Italy</InfoName>
        <InfoDate>Last update:  <Figure>04/12/2020 05:12:26</Figure></InfoDate>
        <InfoLines>
          {facts.map(([k, v]) => (
            <InfoLine key={k}>{k}: <Figure>{v}</Figure></InfoLine>
          ))}
        </InfoLines>
      </InfoCard>
    </MapOverlay>
  </>
);

const DiscordBubble = () => (
  <svg width="104" height="118" viewBox="0 0 104 118">
    <path d="M10 0H94Q104 0 104 10V118L77 94L80 104H10Q0 104 0 94V10Q0 0 10 0Z" fill="#fff" />
    <path d="M26 35Q33 29 43 27.500Q35 31 31 35Q52 27 75 35Q70 31 62 27.500Q73 29 79 35Q88 52 88 69Q82 77 70 77L66 71.500Q72 70 76 65Q53 77 29 65Q33 70 39 71.500L35 77Q23 76 18 69Q18 52 26 35Z" fill="#7289da" />
    <ellipse cx="41.500" cy="56" rx="6.500" ry="7" fill="#fff" />
    <ellipse cx="63" cy="56" rx="6.500" ry="7" fill="#fff" />
  </svg>
);

const WebScreen = () => (
  <>
    <Peek $top={67.5} $height={14.5} />
    <Sheet $round={14}>
      <WebHeader>
        <svg width="34" height="34" viewBox="0 0 34 34" fill="none" stroke={ink} strokeWidth="4.200">
          <path d="M18.500 1.500L3.500 17L18.500 32.500M3.500 17H34" />
        </svg>
        <ScreenTitle $size={41.5}>Web View</ScreenTitle>
      </WebHeader>
      <WebBody>
        <Readme>
          <ReadmeContent>
            <BadgeTail>
              <BadgeName $width={270} />
              <BadgeValue $width={151} $color="#dfb317" />
            </BadgeTail>
            <Badge>
              <BadgeName $width={270}>PULL REQUESTS</BadgeName>
              <BadgeValue $width={229} $color="#dfb317" $tracking={6.1}>206 CLOSED</BadgeValue>
            </Badge>
            <Badge>
              <BadgeName $width={118}>CHAT</BadgeName>
              <BadgeValue $width={221} $color="#44cc11" $tracking={5.8}>298 ONLINE</BadgeValue>
            </Badge>
            <Heading><LinkIcon />Join our Server!</Heading>
            <Rule />
            <DiscordCard>
              <DiscordSlope />
              <DiscordBrand>
                <DiscordBubble />
                <Wordmark>
                  DISCORD
                  <StemCut $left={2} />
                  <StemCut $left={250} />
                </Wordmark>
              </DiscordBrand>
              <ShortRule />
              <ServerRow>
                <Avatar>
                  <AvatarLine $left={9}>NOVEL</AvatarLine>
                  <AvatarLine $left={19}>C<Hazard />VID</AvatarLine>
                </Avatar>
                <ServerText>
                  <ServerName>NovelCovid</ServerName>
                  <ServerOnline>268 ONLINE</ServerOnline>
                </ServerText>
              </ServerRow>
              <JoinButton>JOIN MY SERVER</JoinButton>
            </DiscordCard>
            <Heading><LinkIcon />API</Heading>
            <Rule />
            <Paragraph>
              API for Current cases and more stuff
              <br />
              about COVID-19 or the Novel
              <br />
              Coronavirus Strain
              <br />
              <Link>https://corona.lmao.ninja/</Link>
            </Paragraph>
          </ReadmeContent>
          <ReadmeFooter>View all of README.md</ReadmeFooter>
        </Readme>
      </WebBody>
    </Sheet>
  </>
);

export default function App() {
  return (
    <>
      <Global />
      <Stage>
        <Backdrop width="3341" height="1584" viewBox="0 0 3341 1584">
          <g fill="#f0effe">
            <path d="M700 171L744 174.500L865 184Q1300 230 1606 109C1655 88 1690 72 1731 41C1790 5 1850 3 1895 3C2030 -3 2180 2 2310 25Q2420 60 2440 197H2540Q2548 196 2553 192Q2580 255 2585 334H700Z" />
            <path d="M769 590L2640 698V974L779 906Q754 750 769 590Z" />
            <path d="M650 1087L1731 1099L1745 1100V1473L1731 1476C1450 1545 1200 1565 922 1579L860 1583L650 1580Z" />
          </g>
          <path d="M1500 721H1683A23.500 23.500 0 0 1 1683 768H1735V816H1669A23.300 23.300 0 0 1 1669 862.500H1500Z" fill="#fff" />
        </Backdrop>
        <Phone
          $width={744} $after={121} $edge={2.5}
          $back={`linear-gradient(#fff 0 58px, ${violet} 58px 1525px, ${paper} 1525px)`}
        >
          <DashboardScreen />
        </Phone>
        <Phone
          $width={741} $after={125} $notch={[165, 578]}
          $back={`linear-gradient(#616161 0 116px, ${paper} 116px)`}
        >
          <CountriesScreen />
        </Phone>
        <Phone $width={744} $after={121} $notch={[164, 579]} $back={water}>
          <MapScreen />
        </Phone>
        <Phone
          $width={745} $edge={2} $notch={[165.5, 580]}
          $back={`linear-gradient(#616161 0 109px, ${violet} 109px 1518px, ${paper} 1518px)`}
        >
          <WebScreen />
        </Phone>
      </Stage>
    </>
  );
}
